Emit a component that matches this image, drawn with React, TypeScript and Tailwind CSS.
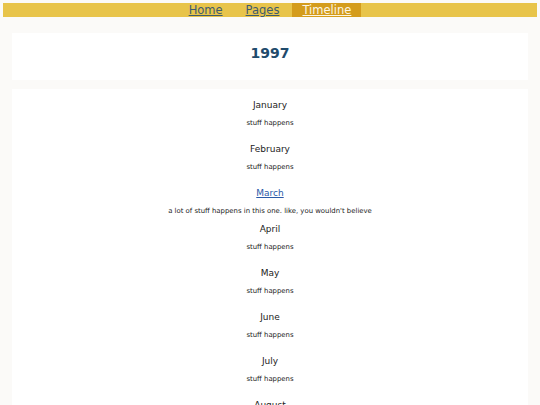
import React from 'react';

const MONTHS: { name: string; text: string; link?: boolean }[] = [
  { name: 'January', text: 'stuff happens' },
  { name: 'February', text: 'stuff happens' },
  { name: 'March', text: "a lot of stuff happens in this one. like, you wouldn't believe", link: true },
  { name: 'April', text: 'stuff happens' },
  { name: 'May', text: 'stuff happens' },
  { name: 'June', text: 'stuff happens' },
  { name: 'July', text: 'stuff happens' },
  { name: 'August', text: 'stuff happens' },
  { name: 'September', text: 'stuff happens' },
];

export default function App() {
  return (
    <div className="min-h-screen bg-[#fbfaf8] pt-[3px] px-[3px]" style={{ fontFamily: '"DejaVu Sans", Verdana, sans-serif' }}>
      <nav className="flex justify-center bg-[#e8c44a] h-[14px] text-[11.5px] leading-[15px] gap-[3px]">
        <a href="#" className="px-[10px] text-[#3e5b6e] underline">Home</a>
        <a href="#" className="px-[10px] text-[#3e5b6e] underline">Pages</a>
        <a href="#" className="px-[10px] bg-[#d49c1c] text-[#fdf6e3] underline">Timeline</a>
      </nav>

      <div className="mx-[9px] mt-[16px] bg-white h-[47px] pt-[13px] text-center">
        <h1 className="text-[14px] font-bold text-[#1f4b6c] leading-[14px]">1997</h1>
      </div>

      <div className="mx-[9px] mt-[9px] bg-white pt-[10px] pb-4 flex flex-col items-center text-[#222]">
        {MONTHS.map((m) => (
          <div key={m.name} className="flex flex-col items-center">
            {m.link ? (
              <a href="#" className="text-[9px] leading-[12px] text-[#2b5aa8] underline">{m.name}</a>
            ) : (
              <div className="text-[9px] leading-[12px]">{m.name}</div>
            )}
            <p className={`text-[6.9px] leading-[10px] mt-[7px] ${m.link ? 'mb-[7px]' : 'mb-[15px]'}`}>{m.text}</p>
          </div>
        ))}
      </div>
    </div>
  );
}
